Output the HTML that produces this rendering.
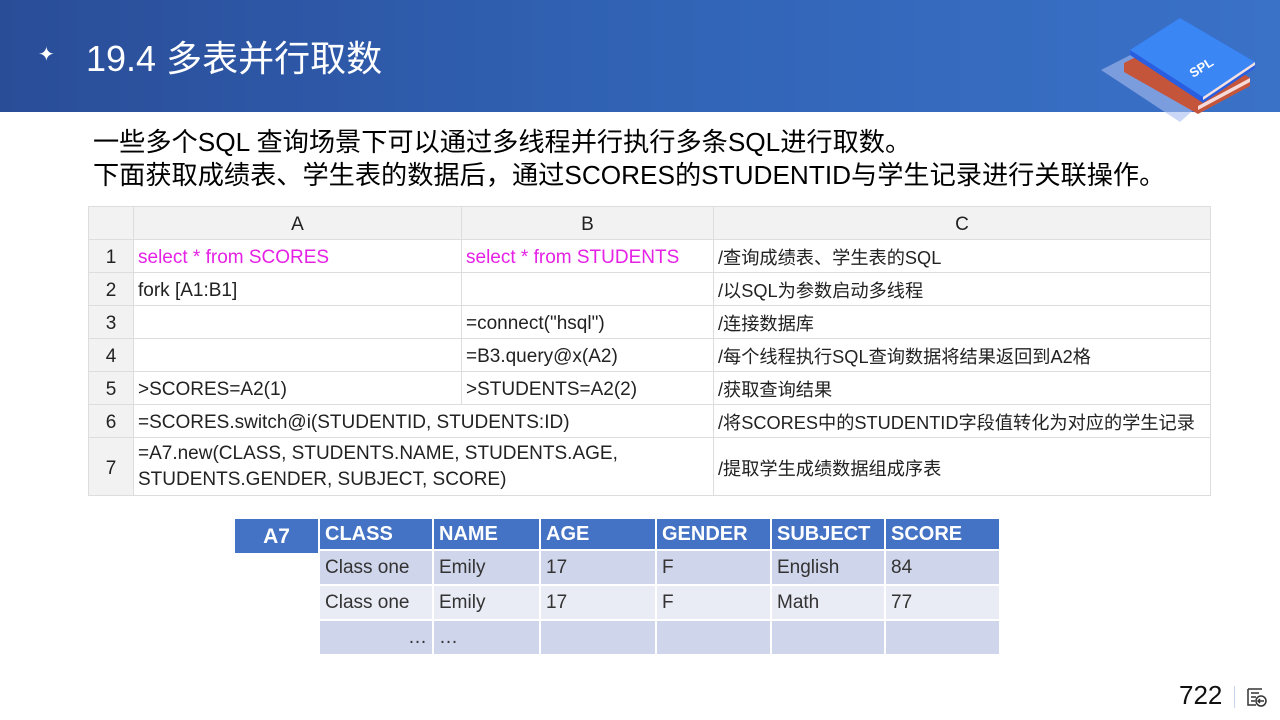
<!DOCTYPE html>
<html><head><meta charset="utf-8"><style>
*{margin:0;padding:0;box-sizing:border-box}
body{width:1280px;height:720px;position:relative;background:#fff;font-family:"Liberation Sans","Noto Sans CJK SC",sans-serif;overflow:hidden}
.hdr{position:absolute;left:0;top:0;width:1280px;height:112px;background:linear-gradient(90deg,#2a4d98 0%,#3163b5 50%,#3a72c8 100%)}
.title{position:absolute;left:86px;top:30px;color:#fff;font-size:36px;font-family:"Liberation Sans","Noto Sans CJK SC",sans-serif}
.star{position:absolute;left:38px;top:42px;color:#fff;font-size:20px}
.intro{position:absolute;left:93px;top:126px;font-size:26.2px;line-height:33px;color:#000;font-family:"Liberation Sans","Noto Sans CJK SC",sans-serif;white-space:nowrap}
table{border-collapse:collapse;position:absolute}
#t1{left:88px;top:206px;font-size:19px;color:#222}
#t1 td{border:1px solid #ddd;padding:4px 4px 0;height:33px;white-space:nowrap;vertical-align:middle;line-height:22px}
#t1 tr:first-child td{background:#f2f2f2;text-align:center}
#t1 td.n{background:#f2f2f2;text-align:center;width:45px}
.pk{color:#e621e6}
#t1 td.c{font-size:18.2px}
#t2{left:318px;top:517px;font-size:19px;color:#333}
#t2 td{border:2px solid #fff;padding:0 5px;height:35px;white-space:nowrap}
#t2 tr.h td{background:#4472c4;color:#fff;font-weight:bold;height:32px;font-size:20px}
.a{background:#cfd5ea}.b{background:#e9ebf5}
.a7{position:absolute;left:235px;top:519px;width:83px;height:34px;background:#4472c4;color:#fff;font-weight:bold;font-size:21px;text-align:center;line-height:36px}
</style></head><body>
<div class="hdr"></div>
<div class="star">✦</div>
<div class="title">19.4 多表并行取数</div>
<svg style="position:absolute;left:1095px;top:10px" width="170" height="115" viewBox="0 0 170 115">
<polygon points="6,60 55,35 115,85 85,112" fill="#a9bdf0" opacity="0.6"/>
<polygon points="29,53 85,25 155,68 155,76 103,104 29,62" fill="#c4543a"/>
<polygon points="103,96 155,68 155,72 103,100" fill="#f6d9d9"/>
<polygon points="35,40 85,8 160,52 160,58 108,93 35,45" fill="#2a5ee0"/>
<polygon points="35,40 85,8 160,52 108,87" fill="#3b86f5"/>
<polygon points="108,87 160,52 160,55 108,90" fill="#f4e2e2"/>
<text x="98" y="68" fill="#fff" font-size="13" font-weight="bold" transform="rotate(-32 98 68)" font-family="Liberation Sans">SPL</text>
</svg>
<div class="intro">一些多个SQL 查询场景下可以通过多线程并行执行多条SQL进行取数。<br>下面获取成绩表、学生表的数据后，通过SCORES的STUDENTID与学生记录进行关联操作。</div>
<table id="t1">
<tr><td style="width:45px"></td><td style="width:328px">A</td><td style="width:252px">B</td><td style="width:497px">C</td></tr>
<tr><td class="n">1</td><td class="pk">select * from SCORES</td><td class="pk">select * from STUDENTS</td><td class="c">/查询成绩表、学生表的SQL</td></tr>
<tr><td class="n">2</td><td>fork [A1:B1]</td><td></td><td class="c">/以SQL为参数启动多线程</td></tr>
<tr><td class="n">3</td><td></td><td>=connect("hsql")</td><td class="c">/连接数据库</td></tr>
<tr><td class="n">4</td><td></td><td>=B3.query@x(A2)</td><td class="c">/每个线程执行SQL查询数据将结果返回到A2格</td></tr>
<tr><td class="n">5</td><td>&gt;SCORES=A2(1)</td><td>&gt;STUDENTS=A2(2)</td><td class="c">/获取查询结果</td></tr>
<tr><td class="n">6</td><td colspan="2">=SCORES.switch@i(STUDENTID, STUDENTS:ID)</td><td class="c">/将SCORES中的STUDENTID字段值转化为对应的学生记录</td></tr>
<tr><td class="n" style="height:58px">7</td><td colspan="2" style="line-height:26px;padding-top:0">=A7.new(CLASS, STUDENTS.NAME, STUDENTS.AGE,<br>STUDENTS.GENDER, SUBJECT, SCORE)</td><td class="c">/提取学生成绩数据组成序表</td></tr>
</table>
<div class="a7">A7</div>
<table id="t2">
<tr class="h"><td style="width:114px">CLASS</td><td style="width:107px">NAME</td><td style="width:116px">AGE</td><td style="width:115px">GENDER</td><td style="width:114px">SUBJECT</td><td style="width:115px">SCORE</td></tr>
<tr class="a"><td>Class one</td><td>Emily</td><td>17</td><td>F</td><td>English</td><td>84</td></tr>
<tr class="b"><td>Class one</td><td>Emily</td><td>17</td><td>F</td><td>Math</td><td>77</td></tr>
<tr class="a"><td style="text-align:right">…</td><td>…</td><td></td><td></td><td></td><td></td></tr>
</table>
<div style="position:absolute;left:1179px;top:680px;font-size:26px;color:#111">722</div>
<div style="position:absolute;left:1234px;top:686px;width:1px;height:22px;background:#c8d4ea"></div>
<svg style="position:absolute;left:1246px;top:686px" width="22" height="22" viewBox="0 0 22 22" fill="none" stroke="#333" stroke-width="1.5"><path d="M2 3h14M2 3v16h8M5 7h8M5 11h5M5 15h4"/><circle cx="15" cy="15" r="5"/><path d="M18 15h-6M14 13l-2 2 2 2"/></svg>
</body></html>
